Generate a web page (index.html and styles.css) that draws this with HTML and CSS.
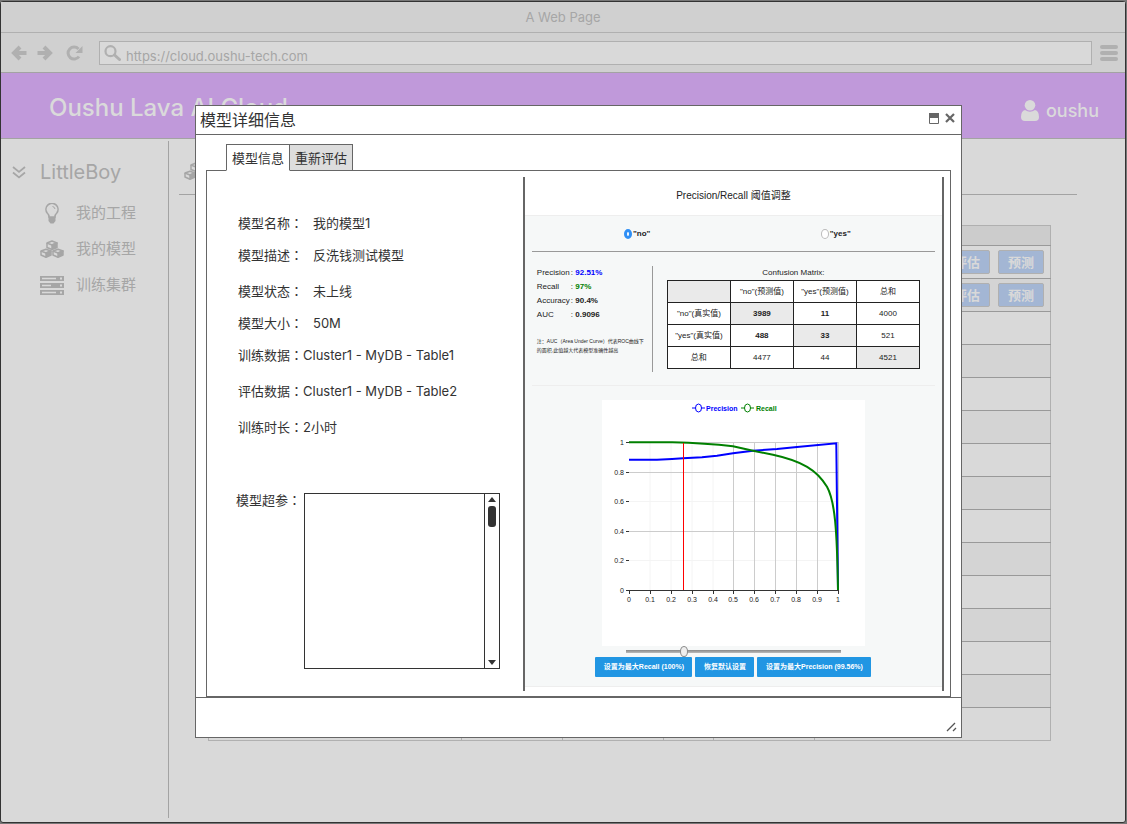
FILE: index.html
```html
<!DOCTYPE html>
<html lang="zh-CN">
<head>
<meta charset="utf-8">
<title>Oushu Lava AI Cloud</title>
<link rel="stylesheet" href="styles.css">
</head>
<body>
<svg class="defs" aria-hidden="true">
  <symbol id="cubes" viewBox="0 0 24 18">
    <g stroke="currentColor" stroke-width="1.500" stroke-linejoin="round">
      <path fill="none" d="M12 1 17 3 12 5 7 3zM6 9.200 11 11 6 13 1 11zM18 9.200 23 11 18 13 13 11z"/>
      <path fill="currentColor" d="M12 5 17 3V7.500L12 9.500zM6 13 11 11V15L6 17.300zM18 13 23 11V15L18 17.300z"/>
      <path fill="none" d="M7 3V7.500L12 9.500M1 11V15L6 17.300M13 11V15L18 17.300"/>
    </g>
  </symbol>
</svg>
<div class="browser">
  <div class="browser-title">A Web Page</div>
  <div class="toolbar">
    <button class="nav-btn" aria-label="后退"><svg width="17" height="16" viewBox="0 0 17 16"><path d="M9 2 3 8l6 6M3 8h12.500" fill="none" stroke="currentColor" stroke-width="4"/></svg></button>
    <button class="nav-btn" aria-label="前进"><svg width="17" height="16" viewBox="0 0 17 16"><path d="m8 2 6 6-6 6M14 8H1.500" fill="none" stroke="currentColor" stroke-width="4"/></svg></button>
    <button class="nav-btn reload" aria-label="刷新"><svg width="17" height="16" viewBox="0 0 17 16"><path d="M13 11.500A6 6 0 1 1 12.500 4" fill="none" stroke="currentColor" stroke-width="3"/><path d="M16.500 1v7h-7z" fill="currentColor"/></svg></button>
    <div class="address">
      <svg width="17" height="16" viewBox="0 0 17 16" fill="none" stroke="currentColor"><circle cx="6.500" cy="6.200" r="5" stroke-width="2.200"/><path d="m10.500 10 5 4.500" stroke-width="3" stroke-linecap="round"/></svg>
      <input class="address-input" type="text" value="https://cloud.oushu-tech.com" aria-label="地址">
    </div>
    <button class="nav-btn menu-btn" aria-label="菜单"><svg width="18" height="16" viewBox="0 0 18 16"><path d="M2 2h14M2 8h14M2 14h14" stroke="currentColor" stroke-width="4" stroke-linecap="round"/></svg></button>
  </div>
  <header class="app-header">
    <div class="brand">Oushu Lava AI Cloud</div>
    <div class="user">
      <svg width="18" height="21" viewBox="0 0 18 21" fill="currentColor"><circle cx="9" cy="5.300" r="5.300"/><path d="M4 10Q9 13.500 14 10Q18 11 18 17Q18 21 14 21H4Q0 21 0 17Q0 11 4 10z"/></svg>
      <span>oushu</span>
    </div>
  </header>
  <div class="app-body">
    <nav class="sidebar">
      <div class="project">
        <svg width="14" height="13" viewBox="0 0 14 13"><path d="m1 1 6 5 6-5M1 6.500l6 5 6-5" fill="none" stroke="currentColor" stroke-width="1.700"/></svg>
        <span>LittleBoy</span>
      </div>
      <a class="nav-item" href="#projects"><span class="nav-icon"><svg width="16" height="21" viewBox="0 0 16 21"><path d="M5 14Q5 11.500 3.200 10A6 6 0 1 1 12.800 10Q11 11.500 11 14z" fill="none" stroke="currentColor" stroke-width="1.600"/><path d="M8.500 3.500Q10.500 3.700 11 6" fill="none" stroke="currentColor"/><path d="M4.500 14h7v4L9.500 20.500h-3L4.500 18z" fill="currentColor"/></svg></span>我的工程</a>
      <a class="nav-item" href="#models"><span class="nav-icon"><svg width="24" height="18"><use href="#cubes"/></svg></span>我的模型</a>
      <a class="nav-item" href="#clusters"><span class="nav-icon"><svg width="24" height="19" viewBox="0 0 24 19"><path d="M0 0h24v5H0zM0 7h24v5H0zM0 14h24v5H0z" fill="currentColor"/><path d="M2 2.500h14M2 9.500h9M2 16.500h14" stroke="#d9d9d9" stroke-width="1.500"/><path d="M20 2.500h2M20 9.500h2M20 16.500h2" stroke="#d9d9d9" stroke-width="2"/></svg></span>训练集群</a>
    </nav>
    <main class="main">
      <div class="main-title"><svg width="24" height="18"><use href="#cubes"/></svg></div>
      <table class="models">
        <colgroup><col class="c-name"><col class="c-mid"><col class="c-mid"><col class="c-small"><col class="c-mid"><col class="c-actions"></colgroup>
        <thead><tr><th></th><th></th><th></th><th></th><th></th><th></th></tr></thead>
        <tbody>
          <tr><td></td><td></td><td></td><td></td><td></td><td><div class="actions"><button class="mini">评估</button><button class="mini">预测</button></div></td></tr>
          <tr><td></td><td></td><td></td><td></td><td></td><td><div class="actions"><button class="mini">评估</button><button class="mini">预测</button></div></td></tr>
          <tr><td></td><td></td><td></td><td></td><td></td><td></td></tr>
          <tr><td></td><td></td><td></td><td></td><td></td><td></td></tr>
          <tr><td></td><td></td><td></td><td></td><td></td><td></td></tr>
          <tr><td></td><td></td><td></td><td></td><td></td><td></td></tr>
          <tr><td></td><td></td><td></td><td></td><td></td><td></td></tr>
          <tr><td></td><td></td><td></td><td></td><td></td><td></td></tr>
          <tr><td></td><td></td><td></td><td></td><td></td><td></td></tr>
          <tr><td></td><td></td><td></td><td></td><td></td><td></td></tr>
          <tr><td></td><td></td><td></td><td></td><td></td><td></td></tr>
          <tr><td></td><td></td><td></td><td></td><td></td><td></td></tr>
          <tr><td></td><td></td><td></td><td></td><td></td><td></td></tr>
          <tr><td></td><td></td><td></td><td></td><td></td><td></td></tr>
          <tr><td></td><td></td><td></td><td></td><td></td><td></td></tr>
        </tbody>
      </table>
    </main>
  </div>
</div>

<div class="overlay">
  <section class="dialog" role="dialog" aria-labelledby="dialog-title">
    <header class="dialog-bar">
      <h1 class="dialog-title" id="dialog-title">模型详细信息</h1>
      <button class="win-btn" aria-label="最大化"><svg width="10" height="11" viewBox="0 0 10 11"><path d="M.5.500h9v10h-9z" fill="none" stroke="currentColor"/><path d="M0 0h10v5H0z" fill="currentColor"/></svg></button>
      <button class="win-btn" aria-label="关闭"><svg width="10" height="10" viewBox="0 0 10 10"><path d="m1 1 8 8m0-8L1 9" stroke="currentColor" stroke-width="2.200"/></svg></button>
    </header>
    <div class="dialog-body">
      <div class="tabs" role="tablist">
        <button class="tab tab-active" role="tab" aria-selected="true">模型信息</button>
        <button class="tab" role="tab" aria-selected="false">重新评估</button>
      </div>
      <div class="panel">
        <div class="info">
          <dl class="fields">
            <div class="field"><dt>模型名称<span class="colon" lang="zh-TW">：</span></dt><dd>我的模型1</dd></div>
            <div class="field"><dt>模型描述<span class="colon" lang="zh-TW">：</span></dt><dd>反洗钱测试模型</dd></div>
            <div class="field spaced"><dt>模型状态<span class="colon" lang="zh-TW">：</span></dt><dd>未上线</dd></div>
            <div class="field"><dt>模型大小<span class="colon" lang="zh-TW">：</span></dt><dd>50M</dd></div>
            <div class="field tight"><dt>训练数据<span class="colon" lang="zh-TW">：</span></dt><dd>Cluster1 - MyDB - Table1</dd></div>
            <div class="field tight spaced"><dt>评估数据<span class="colon" lang="zh-TW">：</span></dt><dd>Cluster1 - MyDB - Table2</dd></div>
            <div class="field tight spaced"><dt>训练时长<span class="colon" lang="zh-TW">：</span></dt><dd>2小时</dd></div>
          </dl>
          <div class="params">
            <label for="params">模型超参<span class="colon" lang="zh-TW">：</span></label>
            <div class="params-box">
              <textarea id="params"></textarea>
              <div class="scrollbar" aria-hidden="true">
                <svg width="8" height="5" viewBox="0 0 8 5"><path d="M0 5 4 0l4 5z" fill="currentColor"/></svg>
                <span class="scroll-thumb"></span>
                <svg width="8" height="5" viewBox="0 0 8 5"><path d="M0 0h8L4 5z" fill="currentColor"/></svg>
              </div>
            </div>
          </div>
        </div>
        <div class="report">
          <h2 class="report-title">Precision/Recall 阈值调整</h2>
          <div class="report-body">
            <div class="choices">
              <label class="choice"><input type="radio" name="target" checked>"no"</label>
              <label class="choice"><input type="radio" name="target">"yes"</label>
            </div>
            <div class="metrics">
              <div class="stats">
                <dl class="stat-list">
                  <dt>Precision</dt><dd>: <b class="blue">92.51%</b></dd>
                  <dt>Recall</dt><dd>: <b class="green">97%</b></dd>
                  <dt>Accuracy</dt><dd>: <b>90.4%</b></dd>
                  <dt>AUC</dt><dd>: <b>0.9096</b></dd>
                </dl>
                <p class="note">注：AUC（Area Under Curve）代表ROC曲线下<br>的面积,此值越大代表模型准确性越高</p>
              </div>
              <div class="matrix-wrap">
                <table class="matrix">
                  <caption>Confusion Matrix:</caption>
                  <tbody>
                    <tr><td class="shade"></td><th>"no"(预测值)</th><th>"yes"(预测值)</th><th>总和</th></tr>
                    <tr><th>"no"(真实值)</th><td class="shade strong">3989</td><td class="strong">11</td><td>4000</td></tr>
                    <tr><th>"yes"(真实值)</th><td class="strong">488</td><td class="shade strong">33</td><td>521</td></tr>
                    <tr><th>总和</th><td>4477</td><td>44</td><td class="shade">4521</td></tr>
                  </tbody>
                </table>
              </div>
            </div>
            <div class="chart-area">
              <svg class="chart" viewBox="0 0 263 246" role="img" aria-label="Precision Recall">
                <path class="grid-faint" d="M48 42v148M69 42v148M90 42v148M111 42v148M27 101.500h209M27 160.500h209"/>
                <path class="grid" d="M27 42.500h209M27 72.500h209M27 131.500h209M131.500 42v148M152.500 42v148M173.500 42v148M194.500 42v148M215.500 42v148M236.500 42v148"/>
                <path class="axis" d="M24 190.500h213M24 42.500h3M24 72.500h3M24 101.500h3M24 131.500h3M24 160.500h3M27.500 190v4M48.500 190v4M69.500 190v4M90.500 190v4M111.500 190v4M131.500 190v4M152.500 190v4M173.500 190v4M194.500 190v4M215.500 190v4M236.500 190v4"/>
                <path class="line precision" d="M27 59.700H55L70 59 81 58.300 100 57.300 115 55.700 131 53.300 151 50.700 175 49 195 47 234.300 43.300 236 190"/>
                <path class="line recall" d="M27 42.300H70C95 43 115 44.500 131 46.300L151 50.700 171 54.700C200 61 215 70 225 86.700C233 101 235 130 236 190"/>
                <path class="threshold" d="M81.500 43v147"/>
                <g class="ticks end"><text x="22" y="45">1</text><text x="22" y="75">0.8</text><text x="22" y="104">0.6</text><text x="22" y="134">0.4</text><text x="22" y="163">0.2</text><text x="22" y="193">0</text></g>
                <g class="ticks"><text x="27" y="202">0</text><text x="48" y="202">0.1</text><text x="69" y="202">0.2</text><text x="90" y="202">0.3</text><text x="111" y="202">0.4</text><text x="131" y="202">0.5</text><text x="152" y="202">0.6</text><text x="173" y="202">0.7</text><text x="194" y="202">0.8</text><text x="215" y="202">0.9</text><text x="236" y="202">1</text></g>
                <g class="legend"><path class="precision" d="M90 8h13"/><ellipse class="precision" cx="96.500" cy="8" rx="3" ry="4"/><text class="t-precision" x="104" y="11">Precision</text><path class="recall" d="M139 8h13"/><ellipse class="recall" cx="145.500" cy="8" rx="3" ry="4"/><text class="t-recall" x="154" y="11">Recall</text></g>
              </svg>
              <input class="slider" type="range" min="0" max="100" value="26" aria-label="阈值">
              <div class="report-actions">
                <button class="action wide">设置为最大Recall (100%)</button>
                <button class="action">恢复默认设置</button>
                <button class="action wider">设置为最大Precision (99.56%)</button>
              </div>
            </div>
          </div>
        </div>
      </div>
    </div>
    <footer class="dialog-foot"><svg width="11" height="10" viewBox="0 0 11 10"><path d="M1 9 9 1M7 9l3-3" stroke="currentColor" stroke-width="1.300"/></svg></footer>
  </section>
</div>
</body>
</html>
```
FILE: styles.css
```css
* { box-sizing: border-box; }
html { background: #777; }
body {
  margin: 0;
  position: relative;
  min-height: 100vh;
  padding: 1px 1px 1px 0;
  display: flex;
  flex-direction: column;
  font: 13px/20px Inter, "Noto Sans CJK SC", sans-serif;
  color: #333;
}
button { font: inherit; color: inherit; background: none; border: 0; padding: 0; }
svg { display: block; flex: none; }
.defs { position: absolute; width: 0; height: 0; }

.browser {
  flex: 1;
  display: flex;
  flex-direction: column;
  border: 1px solid #333;
  border-radius: 3px;
  background: #d9d9d9;
  color: #a6a6a6;
}
.browser-title { height: 31px; line-height: 30px; text-align: center; background: #d0d0d0; border-bottom: 1px solid #b0b0b0; }
.toolbar { height: 40px; display: flex; align-items: center; gap: 8px; padding: 0 7px 0 10px; background: #d0d0d0; border-bottom: 1px solid #a3a3a3; color: #b0b0b0; }
.reload { margin-left: 5px; }
.address { flex: 1; height: 24px; margin-left: 8px; display: flex; align-items: center; gap: 5px; padding-left: 4px; background: #d9d9d9; border: 1px solid #b0b0b0; }
.address-input { flex: 1; min-width: 0; padding: 6px 0 0; border: 0; background: none; font: inherit; color: #a6a6a6; outline: 0; }
.app-header { height: 66px; display: flex; align-items: center; justify-content: space-between; padding: 4px 26px 0 48px; background: #c099da; border-bottom: 1px solid #a3a3a3; color: #dadada; }
.brand { font-size: 24px; line-height: 32px; font-weight: 500; }
.user { display: flex; align-items: center; gap: 7px; padding-top: 6px; font-size: 18px; line-height: 24px; font-weight: 500; }
.app-body { flex: 1; display: flex; padding: 2px 0 4px; }
.sidebar { width: 168px; border-right: 1px solid #a3a3a3; padding-top: 16px; }
.project { display: flex; align-items: center; gap: 14px; height: 30px; margin-bottom: 8px; padding-left: 11px; font-size: 20px; }
.nav-item { display: flex; align-items: center; gap: 12px; height: 36px; padding-left: 39px; color: inherit; font-size: 15px; text-decoration: none; }
.nav-icon { width: 24px; display: flex; justify-content: center; }
.main { flex: 1; min-width: 0; padding: 0 48px 0 10px; }
.main-title { height: 54px; padding: 21px 0 0 5px; border-bottom: 1px solid #a3a3a3; }
.models { width: calc(100% - 55px); margin: 30px 26px 0 29px; table-layout: fixed; border-collapse: collapse; border: 1px solid #b0b0b0; }
.c-name { width: 30%; }
.c-mid { width: 12%; }
.c-small { width: 6%; }
.c-actions { width: 28%; }
.models th { height: 20px; padding: 0; background: #cccccc; }
.models td { height: 33px; padding: 0; border-top: 1px solid #999; border-left: 1px solid #b0b0b0; }
.models tbody tr:nth-child(even) { background: #d4d4d4; }
.actions { display: flex; justify-content: flex-end; gap: 8px; padding-right: 6px; }
.mini { width: 46px; height: 24px; border: 1px solid #b0b0b0; border-radius: 2px; background: #a3b6d4; color: #d9d9d9; font-weight: 700; line-height: 22px; }

.overlay { position: absolute; inset: 0; padding: 105px 165px 0 195px; }
.dialog { background: #fff; border: 1px solid #666; }
.dialog-bar { height: 29px; display: flex; align-items: center; gap: 6px; padding: 0 6px 0 4px; border-bottom: 1px solid #666; color: #666; }
.dialog-title { flex: 1; margin: 0; font-size: 16px; line-height: 24px; font-weight: 400; color: #333; }
.win-btn { padding-bottom: 4px; }
.dialog-body { padding: 9px 10px 0; }
.tabs { display: flex; padding-left: 20px; }
.tab { position: relative; width: 64px; height: 27px; margin: 0 -1px -1px 0; border: 1px solid #666; background: #ddd; color: #333; }
.tab-active { z-index: 1; background: #fff; border-bottom-color: #fff; }
.panel { display: grid; grid-template-columns: minmax(0, 3fr) minmax(0, 4fr); border: 1px solid #666; padding: 6px 6px 5px 0; }
.info { padding: 36px 0 0 31px; }
.fields { margin: 0; display: flex; flex-direction: column; gap: 12px; }
.field { display: flex; gap: 10px; height: 20px; }
.field dt { width: 65px; flex: none; white-space: nowrap; }
.field dd { margin: 0; white-space: nowrap; }
.colon { font-family: "Noto Sans CJK TC", sans-serif; line-height: 1; }
.tight { gap: 0; }
.spaced { margin-top: 4px; }
.params { display: flex; align-items: flex-start; gap: 3px; margin: 56px 23px 0 -2px; }
.params label { width: 65px; flex: none; line-height: 12px; white-space: nowrap; }
.params-box { flex: 1; min-width: 0; display: flex; height: 176px; border: 1px solid #333; }
.params-box textarea { flex: 1; min-width: 0; border: 0; padding: 4px; background: #fff; resize: none; outline: 0; font: inherit; }
.scrollbar { width: 15px; flex: none; border-left: 1px solid #333; display: flex; flex-direction: column; align-items: center; padding: 3px 0; gap: 4px; color: #333; }
.scroll-thumb { width: 8px; height: 21px; margin-bottom: auto; border-radius: 3px; background: #333; }

.report { border: 2px solid #666; border-width: 0 2px; padding-bottom: 4px; font: 8px/14px "Liberation Sans", "Noto Sans CJK SC", sans-serif; color: #222; }
.report-title { margin: 0; height: 39px; font-size: 10px; line-height: 38px; font-weight: 400; text-align: center; border-bottom: 1px solid #eee; }
.report-body { background: #f6f8f8; border-bottom: 1px solid #eee; padding: 0 7px 9px; }
.choices { display: grid; grid-template-columns: 1fr 1fr; justify-items: center; height: 36px; align-items: center; padding-left: 6px; border-bottom: 1px solid #999; }
.choice { display: flex; align-items: center; gap: 1px; font-weight: 700; }
.choice input { appearance: none; width: 8px; height: 10px; margin: 0; border: 1px solid #bbb; border-radius: 50%; background: #fff; }
.choice input:checked { border: 3px solid #2f8ff5; }
.metrics { display: flex; gap: 14px; height: 133px; padding: 14px 15px 0 5px; }
.stats { width: 116px; height: 106px; flex: none; border-right: 1px solid #999; }
.stat-list { margin: 0; display: grid; grid-template-columns: 34px 1fr; line-height: 14px; }
.stat-list dd { margin: 0; }
.blue { color: #00f; }
.green { color: #008000; }
.note { margin: 15px 0 0; font-size: 5px; line-height: 9px; white-space: nowrap; }
.matrix-wrap { flex: 1; min-width: 0; }
.matrix { width: 100%; table-layout: fixed; border-collapse: collapse; text-align: center; }
.matrix caption { line-height: 14px; }
.matrix th, .matrix td { height: 22px; padding: 0; border: 1px solid #222; background: #fff; font-weight: 400; line-height: 12px; }
.matrix .shade { background: #eaeaea; }
.matrix .strong { font-weight: 700; }
.chart-area { display: flex; flex-direction: column; align-items: center; padding-top: 14px; border-top: 1px solid #eee; }
.chart { width: 263px; height: 246px; background: #fff; }
.grid { stroke: #ccc; fill: none; }
.grid-faint { stroke: #f4f4f4; fill: none; }
.axis { stroke: #333; fill: none; }
.line { fill: none; stroke-width: 2; }
.precision { stroke: #00f; }
.recall { stroke: #008000; }
.threshold { stroke: #f00; fill: none; }
.ticks { font-size: 7px; text-anchor: middle; fill: #222; }
.ticks.end { text-anchor: end; }
.legend { font-size: 7px; font-weight: 700; }
.legend ellipse { fill: #fff; }
.t-precision { fill: #00f; }
.t-recall { fill: #008000; }
.slider { appearance: none; width: 215px; height: 11px; margin: 0; background: linear-gradient(#888, #bbb) center / 100% 3px no-repeat; }
.slider::-webkit-slider-thumb { appearance: none; width: 8px; height: 11px; border: 1px solid #888; border-radius: 50%; background: #eee; }
.report-actions { display: flex; gap: 3px; }
.action { height: 20px; width: 59px; border-radius: 1px; background: #2196e3; color: #fff; font-size: 7px; line-height: 20px; font-weight: 700; white-space: nowrap; }
.wide { width: 97px; }
.wider { width: 114px; }
.dialog-foot { height: 40px; display: flex; align-items: flex-end; justify-content: flex-end; padding: 0 4px 5px; border-top: 1px solid #666; color: #555; }
```
